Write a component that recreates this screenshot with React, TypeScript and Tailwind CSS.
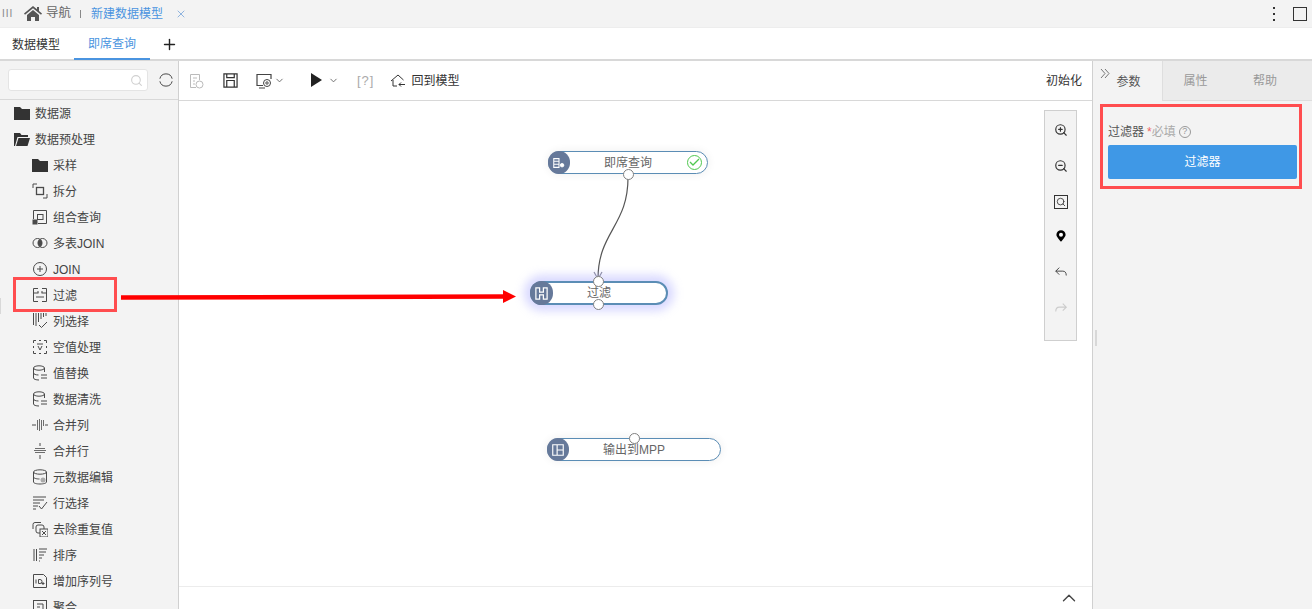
import React from 'react';
import { Search, X, Plus, ChevronDown, ChevronUp, ZoomIn, ZoomOut } from 'lucide-react';

const S: React.FC<{ children: React.ReactNode; size?: number; className?: string }> = ({ children, size = 16, className }) => (
  <svg width={size} height={size} viewBox="0 0 16 16" fill="none" stroke="currentColor" strokeWidth="1" className={className}>
    {children}
  </svg>
);

const Folder = () => (
  <svg width="16" height="13" viewBox="0 0 16 13" fill="#333"><path d="M0 0h6l2 2h8v11H0z" /></svg>
);
const FolderOpen = () => (
  <svg width="16" height="13" viewBox="0 0 16 13" fill="#333"><path d="M0 0h6l1.500 2H14v2H3.500L1 13H0z" /><path d="M4.500 5H16l-2.500 8H2z" /></svg>
);

const icons: Record<string, React.ReactNode> = {
  folder: <Folder />,
  split: <S><path d="M1 5V1h4M15 11v4h-4" /><rect x="4.500" y="4.500" width="7" height="7" strokeWidth="1.300" /></S>,
  combine: <S><path d="M1.500 10V1.500h13v13H6" /><rect x="5.500" y="5.500" width="5.500" height="5" /><rect x="1" y="11" width="4" height="4" fill="currentColor" /></S>,
  multi: <S><circle cx="5.500" cy="8" r="4.500" /><circle cx="10.500" cy="8" r="4.500" /><path d="M8 4.500a4.500 4.500 0 0 1 0 7a4.500 4.500 0 0 1 0-7z" fill="currentColor" /></S>,
  join: <S><circle cx="8" cy="8" r="6.500" /><path d="M8 5v6M5 8h6" /></S>,
  filter: <S><path d="M6 1.500H1.500v13H6M10 1.500h4.500v13H10M1.500 6h5M9.500 6h5M4 10h8M6 4v2M10 4v2" /></S>,
  column: <S><path d="M1.500 0v12M4 0v13M6.500 0v9M9 0v6M11.500 0v4M14 0v3M7 12l2.500 2.500L15 9" /></S>,
  empty: <S><path d="M1.500 4V1.500H4M12 1.500h2.500V4M14.500 12v2.500H12M4 14.500H1.500V12M1.500 7v2M14.500 7v2M7 1.500h2M7 14.500h2" /><path d="M5 5h6M6 7l2 4 2-4" /></S>,
  db: <S><ellipse cx="7" cy="3" rx="5.500" ry="2.200" /><path d="M1.500 3v10c0 1.200 2.500 2 5.500 2M1.500 8c0 1.200 2.500 2 5 2M12.500 3v4M9 10h6M9 13h6" /></S>,
  mergeCol: <S size={16}><path d="M5.500 3v10M7.500 2v12M9.500 3v10M11.500 3v6" strokeWidth="0.800" /><path d="M0 8h4M13 8h3" /></S>,
  mergeRow: <S size={16}><path d="M3 5.500h10M2 7.500h12M3 9.500h10" strokeWidth="0.800" /><path d="M8 0v3M8 12v4" /></S>,
  meta: <S><ellipse cx="8" cy="3" rx="6.500" ry="2.200" /><path d="M1.500 3v10c0 1.200 3 2 6.500 2s6.500-.8 6.500-2V3M1.500 8c0 1.200 3 2 6 2" /><circle cx="11" cy="11" r="2.500" fill="#aaa" stroke="none" /></S>,
  rowSel: <S><path d="M1 2h13M1 5h11M1 8h7M1 11h5M1 14h3M7 11l2.500 3L15 7" /></S>,
  dedup: <S><path d="M9 1.500H3a2 2 0 0 0-2 2V8" /><rect x="4" y="4" width="8" height="8" rx="2" /><rect x="8" y="8" width="8" height="8" fill="#f3f3f3" /><path d="M10 10l4 4M14 10l-4 4" /></S>,
  sort: <S><path d="M2 2v12M4.500 2v12M7 2h8M7 5h7M7 8h5M7 11h3M7 14h1" /></S>,
  idx: <S><path d="M1.500 1.500h10l3 3v10h-13z" /><path d="M4 6.500v4M6.500 6.500v4h1.500a2 2 0 0 0 0-4zM11 9v3M9.500 10.500h3" /></S>,
  agg: <S><rect x="1.500" y="1.500" width="13" height="13" /><path d="M5 5h6v6M5 8h3" /></S>,
};

const rows: [string, string][] = [
  ['folder', '采样'], ['split', '拆分'], ['combine', '组合查询'], ['multi', '多表JOIN'], ['join', 'JOIN'],
  ['filter', '过滤'], ['column', '列选择'], ['empty', '空值处理'], ['db', '值替换'], ['db', '数据清洗'],
  ['mergeCol', '合并列'], ['mergeRow', '合并行'], ['meta', '元数据编辑'], ['rowSel', '行选择'], ['dedup', '去除重复值'],
  ['sort', '排序'], ['idx', '增加序列号'], ['agg', '聚合'],
];

const Port: React.FC<{ className: string }> = ({ className }) => (
  <span className={`absolute w-[11px] h-[11px] rounded-full bg-white border border-[#808080] ${className}`} />
);

const NodeIcon: React.FC<{ children: React.ReactNode; className?: string }> = ({ children, className }) => (
  <span className={`absolute left-[-1px] top-[-1px] rounded-full bg-[#66799a] text-white flex items-center justify-center ${className}`}>{children}</span>
);

const App: React.FC = () => {
  return (
    <div className="w-[1312px] h-[609px] overflow-hidden flex flex-col bg-white text-[12px] text-[#444] font-['Liberation_Sans','Noto_Sans_CJK_SC',sans-serif] relative">
      {/* top bar */}
      <div className="h-[28px] shrink-0 bg-[#f3f3f3] flex items-center border-b border-[#ededed]">
        <span className="ml-[2px] text-[#888] text-[10px] tracking-[1px] w-[22px]">III</span>
        <svg width="18" height="15" viewBox="0 0 18 15" fill="#555">
          <path d="M9 0l4 3.300V1h2v4l3 2.500-1 1.200L9 2.200 1 8.700 0 7.500z" />
          <path d="M3 9l6-5 6 5v6h-4v-4H7v4H3z" />
        </svg>
        <span className="ml-[4px] text-[#666] text-[12.500px]">导航</span>
        <span className="ml-[9px] w-px h-[8px] bg-[#888]" />
        <span className="ml-[10px] text-[#4a94e0]">新建数据模型</span>
        <X size={12} strokeWidth={2} className="ml-[12px] text-[#8fb4df]" />
        <svg width="4" height="16" viewBox="0 0 4 16" fill="#333" className="ml-auto">
          <rect x="1" y="1" width="2" height="2" /><rect x="1" y="7" width="2" height="2" /><rect x="1" y="13" width="2" height="2" />
        </svg>
        <span className="ml-[17px] mr-[5px] w-[14px] h-[14px] border border-[#333]" />
      </div>

      {/* sheet tabs */}
      <div className="h-[33px] shrink-0 bg-white flex items-stretch border-b-2 border-[#d8d8d8]">
        <span className="pl-[12px] pr-[14px] pt-[2px] flex items-center text-[#333]">数据模型</span>
        <span className="w-[76px] pt-[2px] flex items-center justify-center text-[#4a94e0] border-b-2 border-[#4a94e0] mb-[-1px]">即席查询</span>
        <span className="ml-[11px] pt-[1px] flex items-center"><Plus size={17} strokeWidth={2} className="text-[#222]" /></span>
      </div>

      <div className="flex-1 flex min-h-0">
        {/* sidebar */}
        <div className="w-[179px] shrink-0 bg-[#f3f3f3] border-r border-[#d0d0d0] flex flex-col overflow-hidden">
          <div className="h-[39px] shrink-0 flex items-center pl-[8px] border-b border-[#d8d8d8]">
            <div className="w-[140px] h-[22px] bg-white border border-[#e4e4e4] rounded-[3px] flex items-center justify-end pr-[4px]">
              <Search size={13} className="text-[#d0d0d0]" />
            </div>
            <svg width="14" height="14" viewBox="0 0 16 16" fill="none" stroke="#444" strokeWidth="1.100" className="ml-[11px]">
              <path d="M1 6.500a7.200 7.200 0 0 1 14 0M15 9.500a7.200 7.200 0 0 1-14 0" />
            </svg>
          </div>
          <div className="flex items-center h-[26px] pl-[14px] gap-[5px] shrink-0"><Folder /><span className="pt-[1px]">数据源</span></div>
          <div className="flex items-center h-[26px] pl-[14px] gap-[5px] shrink-0"><FolderOpen /><span className="pt-[1px]">数据预处理</span></div>
          {rows.map(([icon, label]) => (
            <div key={label} className="flex items-center h-[26px] pl-[32px] shrink-0">
              <span className="w-[21px] flex items-center text-[#4a4a4a]">{icons[icon]}</span>
              <span className="pt-[1px]">{label}</span>
            </div>
          ))}
        </div>

        {/* main */}
        <div className="flex-1 flex flex-col min-w-0">
          <div className="h-[40px] shrink-0 flex items-center border-b border-[#d8d8d8] pl-[9px] pr-[10px]">
            <S className="text-[#bbb]"><path d="M2.500 14.500v-13h9V7M5 5h4M5 8h2M5 11h2M2.500 14.500H8" /><circle cx="11.500" cy="11.500" r="3.500" /></S>
            <S className="ml-[19px] text-[#333]" size={15}><path d="M1 1h14v14H1zM4 1v4h8V1M4 15V8h8v7" strokeWidth="1.300" /></S>
            <S className="ml-[18px] text-[#444]"><path d="M7 12.500H1V1.500h14V6M3 15h6" strokeWidth="1.200" /><circle cx="11" cy="10" r="3.500" /><circle cx="11" cy="10" r="1.200" /></S>
            <ChevronDown size={11} className="ml-[2px] text-[#666]" />
            <svg width="11" height="14" viewBox="0 0 11 14" className="ml-[26px] mb-[2px]"><path d="M0 0l11 7-11 7z" fill="#222" /></svg>
            <ChevronDown size={11} className="ml-[6px] text-[#666]" />
            <span className="ml-[18px] pt-[1px] text-[#aaa] text-[13px] tracking-[1px]">[?]</span>
            <S className="ml-[16px] text-[#333]"><path d="M1 8l7-6 5.500 5M3 7v6h4M9 11.500h6M11 9.500l-2 2 2 2" /></S>
            <span className="ml-[5px] pt-[1px] text-[#333]">回到模型</span>
            <span className="ml-auto text-[#333]">初始化</span>
          </div>

          {/* canvas */}
          <div className="flex-1 relative bg-white">
            <svg width="913" height="300" className="absolute left-0 top-0" fill="none">
              <path d="M449 74C450 125 419 130 419 178" stroke="#555" strokeWidth="1.200" />
              <path d="M415 171l4 7 4-7" stroke="#8a8a9a" strokeWidth="1.200" />
            </svg>

            <div className="absolute left-[369px] top-[50px] w-[160px] h-[23px] rounded-full border border-[#5b8db5] bg-white shadow-[0_0_10px_rgba(0,0,0,0.07)] flex items-center justify-center text-[#666]">
              <NodeIcon className="w-[22px] h-[23px]">
                <S size={14}><path d="M2 3h6v10H2zM2 6h6M2 9.500h6" strokeWidth="1.200" /><circle cx="11.500" cy="10.500" r="2" fill="white" /></S>
              </NodeIcon>
              即席查询
              <span className="absolute right-[5px] top-[3px] w-[15px] h-[15px] rounded-full border border-[#4fc74f] flex items-center justify-center">
                <svg width="11" height="9" viewBox="0 0 11 9" fill="none" stroke="#4fc74f" strokeWidth="1.300"><path d="M1 4l3 3 6-6" /></svg>
              </span>
              <Port className="left-[74px] top-[17px]" />
            </div>

            <div className="absolute left-[351px] top-[180px] w-[138px] h-[24px] rounded-full border-2 border-[#5b8db5] bg-white shadow-[0_0_10px_6px_rgba(170,170,255,0.45)] flex items-center justify-center text-[#666]">
              <NodeIcon className="w-[23px] h-[24px] left-[-2px] top-[-2px]">
                <S size={15}><path d="M2 2h4v4.500h4V2h4v12h-4V9.500H6V14H2z" strokeWidth="1.300" /></S>
              </NodeIcon>
              过滤
              <Port className="left-[61px] top-[-7px]" />
              <Port className="left-[61px] top-[16px]" />
            </div>

            <div className="absolute left-[368px] top-[337px] w-[174px] h-[23px] rounded-full border border-[#5b8db5] bg-white shadow-[0_0_10px_rgba(0,0,0,0.07)] flex items-center justify-center text-[#666]">
              <NodeIcon className="w-[22px] h-[23px]">
                <S size={14}><path d="M2 2h12v12H2zM7 2v12M7 8h7" strokeWidth="1.300" /></S>
              </NodeIcon>
              输出到MPP
              <Port className="left-[81px] top-[-6px]" />
            </div>

            {/* zoom tools */}
            <div className="absolute right-[15px] top-[9px] w-[33px] h-[231px] bg-[#f3f3f3] border border-[#cfcfcf] flex flex-col items-center pt-[12px] gap-[22px] text-[#333]">
              <ZoomIn size={14} />
              <ZoomOut size={14} />
              <span className="w-[14px] h-[14px] border border-[#333] flex items-center justify-center"><Search size={10} /></span>
              <svg width="10" height="14" viewBox="0 0 12 14" className="mt-[-2px]"><path d="M6 14C2 9 .5 7.500.5 5.500a5.500 5.500 0 0 1 11 0C11.500 7.500 10 9 6 14z" fill="#000" /><circle cx="6" cy="5.500" r="2.400" fill="#fff" /></svg>
              <S size={14}><path d="M6 3L2 7l4 4M2 7h8c2.500 0 4 1.500 4 5" /></S>
              <S size={14} className="text-[#ccc]"><path d="M10 3l4 4-4 4M14 7H6c-2.500 0-4 1.500-4 5" strokeWidth="1.300" /></S>
            </div>

            <div className="absolute left-0 right-0 bottom-0 h-[23px] border-t border-[#ececec] bg-white flex items-center justify-end pr-[12px]">
              <ChevronUp size={22} strokeWidth={1.500} className="text-[#444]" />
            </div>
          </div>
        </div>

        {/* right panel */}
        <div className="w-[220px] shrink-0 bg-[#f3f3f3] border-l border-[#d0d0d0] flex flex-col relative">
          <div className="h-[40px] shrink-0 flex items-stretch text-[#999]">
            <div className="w-[69px] pt-[1px] flex items-center justify-center pl-[2px] text-[#555] relative">
              <svg width="10" height="9" viewBox="0 0 10 9" fill="none" stroke="#777" className="absolute left-[7px] top-[8px]"><path d="M1 0l4 4.500L1 9M5 0l4 4.500L5 9" /></svg>
              参数
            </div>
            <div className="flex-1 flex bg-[#ebebeb] border-l border-b border-[#dedede] pt-[1px]">
              <span className="w-[65px] flex items-center justify-center">属性</span>
              <span className="w-[68px] ml-[3px] flex items-center justify-center">帮助</span>
            </div>
          </div>
          <div className="mt-[3px] ml-[7px] w-[202px] h-[85px] border-[3px] border-[#ff4d4f] pl-[5px] pr-[2px] pt-[16px]">
            <div className="flex items-center h-[17px] mb-[5px]">
              <span className="text-[#555]">过滤器</span>
              <span className="ml-[3px] text-[#ee6666]">*</span>
              <span className="text-[#aaa]">必填</span>
              <span className="ml-[3px] w-[12px] h-[12px] rounded-full border border-[#999] text-[#999] text-[9px] flex items-center justify-center">?</span>
            </div>
            <div className="h-[34px] bg-[#3f98e6] rounded-[2px] text-white flex items-center justify-center">过滤器</div>
          </div>
        </div>
      </div>

      {/* annotation */}
      <div className="absolute left-[13px] top-[277px] w-[104px] h-[35px] border-[3px] border-[#ff4d4f]" />
      <svg width="420" height="16" className="absolute left-[120px] top-[289px]">
        <path d="M1 8.500L385 7.500" stroke="#f00" strokeWidth="4.500" />
        <path d="M383 1l13 6.500-13 6.500z" fill="#f00" />
      </svg>
      {/* splitter handles */}
      <span className="absolute left-0 top-[298px] w-[1px] h-[16px] bg-[#d8d8d8]" />
      <span className="absolute left-[1095px] top-[330px] w-[2px] h-[16px] bg-[#d8d8d8]" />
    </div>
  );
};

export default App;
